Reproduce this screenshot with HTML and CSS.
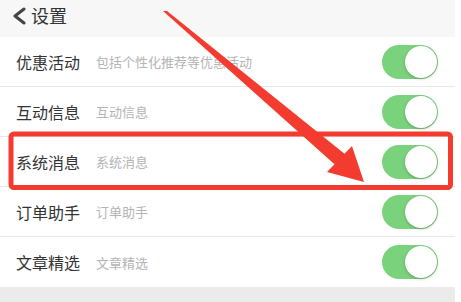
FILE: index.html
```html
<!DOCTYPE html>
<html lang="zh-CN">
<head>
<meta charset="utf-8">
<title>设置</title>
<link rel="stylesheet" href="styles.css">
</head>
<body>
<div class="page">
  <header class="header">
    <svg class="back" width="14" height="18" viewBox="0 0 14 18"><polyline points="12,2 3,9 12,16" fill="none" stroke="#444" stroke-width="3" stroke-linejoin="round" stroke-linecap="round"/></svg>
    <span class="title">设置</span>
  </header>
  <div class="list">
    <div class="row"><span class="name">优惠活动</span><span class="desc">包括个性化推荐等优惠活动</span><span class="toggle"><span class="knob"></span></span></div>
    <div class="row"><span class="name">互动信息</span><span class="desc">互动信息</span><span class="toggle"><span class="knob"></span></span></div>
    <div class="row"><span class="name">系统消息</span><span class="desc">系统消息</span><span class="toggle"><span class="knob"></span></span></div>
    <div class="row"><span class="name">订单助手</span><span class="desc">订单助手</span><span class="toggle"><span class="knob"></span></span></div>
    <div class="row last"><span class="name">文章精选</span><span class="desc">文章精选</span><span class="toggle"><span class="knob"></span></span></div>
  </div>
  <div class="footer"></div>
</div>
<svg class="annot" width="461" height="302" viewBox="0 0 461 302">
  <rect x="11" y="134" width="439.5" height="53.5" rx="3" fill="none" stroke="#f43b2f" stroke-width="5"/>
  <polygon fill="#f43b2f" points="163,11 167,11 344.5,153.8 352,146 364,182 327,172 334.5,164.2"/>
</svg>
</body>
</html>
```
FILE: styles.css
```css
html, body {
  margin: 0;
  padding: 0;
  background: #ffffff;
}
body {
  width: 461px;
  height: 302px;
  overflow: hidden;
  position: relative;
  font-family: "Noto Sans CJK SC", "Noto Sans", sans-serif;
}
.page {
  width: 455px;
  height: 302px;
  display: flex;
  flex-direction: column;
}
.header {
  height: 37px;
  flex: none;
  background: #f7f7f7;
  display: flex;
  align-items: center;
  padding-left: 12px;
  box-sizing: border-box;
}
.back {
  display: block;
  margin-top: -6px;
}
.title {
  margin-left: 5px;
  font-size: 18px;
  line-height: 18px;
  color: #333333;
  margin-top: -7px;
}
.list {
  flex: none;
}
.row {
  height: 50px;
  box-sizing: border-box;
  display: flex;
  align-items: center;
  padding: 0 17px 0 16px;
  border-bottom: 1px solid #e8e8e8;
}
.row.last {
  border-bottom: none;
}
.name {
  font-size: 16px;
  color: #333333;
  width: 80px;
  flex: none;
}
.desc {
  font-size: 13px;
  color: #b4b4b4;
  flex: 1;
}
.toggle {
  width: 56px;
  height: 34px;
  border-radius: 17px;
  background: #7bd27c;
  display: flex;
  justify-content: flex-end;
  align-items: center;
  padding: 1px;
  box-sizing: border-box;
  flex: none;
}
.knob {
  width: 32px;
  height: 32px;
  border-radius: 50%;
  background: #ffffff;
  box-shadow: 0 1px 3px rgba(0, 0, 0, 0.25);
}
.footer {
  flex: 1;
  background: #ebebeb;
}
.annot {
  position: absolute;
  left: 0;
  top: 0;
  pointer-events: none;
}
```
